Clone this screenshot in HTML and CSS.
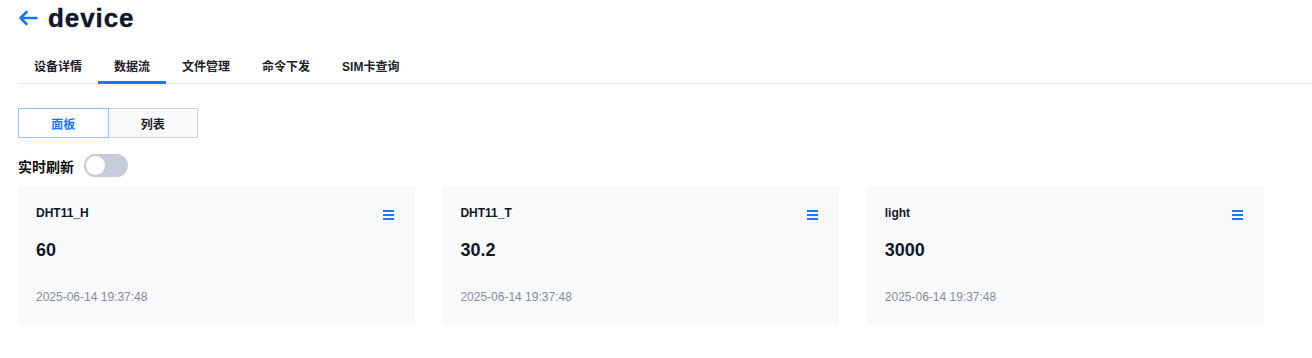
FILE: index.html
```html
<!DOCTYPE html>
<html lang="zh">
<head>
<meta charset="utf-8">
<title>device</title>
<link rel="stylesheet" href="styles.css">
</head>
<body>
<div class="page">
  <header class="header">
    <svg class="back" width="20" height="16" viewBox="0 0 20 16" aria-hidden="true">
      <path d="M18.5 8H2.5M8.5 2L2.5 8l6 6" fill="none" stroke="#1677ff" stroke-width="2.6" stroke-linecap="round" stroke-linejoin="round"/>
    </svg>
    <h1 class="title">device</h1>
  </header>

  <nav class="tabs">
    <div class="tab">设备详情</div>
    <div class="tab active">数据流</div>
    <div class="tab">文件管理</div>
    <div class="tab">命令下发</div>
    <div class="tab">SIM卡查询</div>
  </nav>

  <div class="segment">
    <div class="seg seg-on">面板</div>
    <div class="seg">列表</div>
  </div>

  <div class="refresh">
    <span class="refresh-label">实时刷新</span>
    <span class="switch"><span class="knob"></span></span>
  </div>

  <div class="cards">
    <div class="card">
      <div class="card-head">
        <span class="card-name">DHT11_H</span>
        <span class="menu"><i></i><i></i><i></i></span>
      </div>
      <div class="card-value">60</div>
      <div class="card-time">2025-06-14 19:37:48</div>
    </div>
    <div class="card">
      <div class="card-head">
        <span class="card-name">DHT11_T</span>
        <span class="menu"><i></i><i></i><i></i></span>
      </div>
      <div class="card-value">30.2</div>
      <div class="card-time">2025-06-14 19:37:48</div>
    </div>
    <div class="card">
      <div class="card-head">
        <span class="card-name">light</span>
        <span class="menu"><i></i><i></i><i></i></span>
      </div>
      <div class="card-value">3000</div>
      <div class="card-time">2025-06-14 19:37:48</div>
    </div>
  </div>
</div>
</body>
</html>
```

FILE: styles.css
```css
* { box-sizing: border-box; }
html, body { margin: 0; padding: 0; background: #fff; }
body {
  font-family: "Liberation Sans", "Noto Sans CJK SC", Arial, sans-serif;
  color: #1a1f2b;
}
.page { padding: 0 0 0 18px; }

.header {
  display: flex;
  align-items: center;
  height: 36px;
}
.back { display: block; margin-right: 10px; margin-top: -1px; }
.title {
  margin: 0;
  font-size: 26px;
  font-weight: 900;
  color: #0f1729;
  letter-spacing: 0.9px;
  line-height: 36px;
  -webkit-text-stroke: 0.4px #0f1729;
}

.tabs {
  display: flex;
  margin-top: 15px;
  border-bottom: 1px solid #e4e6ea;
  height: 33px;
}
.tab {
  padding: 0 16px;
  font-size: 12px;
  font-weight: 700;
  line-height: 32px;
  color: #1d2129;
  position: relative;
}
.tab.active::after {
  content: "";
  position: absolute;
  left: 0; right: 0; bottom: -1px;
  height: 3px;
  background: #1677ff;
}

.segment {
  display: flex;
  margin-top: 24px;
  width: 180px;
  height: 30px;
}
.seg {
  flex: 1;
  display: flex;
  align-items: center;
  justify-content: center;
  font-size: 12px;
  font-weight: 700;
  color: #1d2129;
  background: #fafafa;
  border: 1px solid #cfd2d6;
  border-left: none;
}
.seg-on {
  color: #1677ff;
  background: #fff;
  border: 1px solid #9dbdf5;
}

.refresh {
  display: flex;
  align-items: center;
  margin-top: 16px;
  height: 23px;
}
.refresh-label {
  font-size: 14px;
  font-weight: 700;
  color: #111;
  margin-right: 10px;
}
.switch {
  width: 44px;
  height: 23px;
  border-radius: 12px;
  background: #c6cdd9;
  padding: 2px;
  display: flex;
  align-items: center;
}
.knob {
  width: 19px;
  height: 19px;
  border-radius: 50%;
  background: #fff;
}

.cards {
  display: grid;
  grid-template-columns: repeat(3, 397px);
  column-gap: 27.4px;
  margin-top: 9px;
}
.card {
  background: #f8f9fb;
  height: 139px;
  padding: 19px 21px 0 18px;
  display: flex;
  flex-direction: column;
}
.card-head {
  display: flex;
  justify-content: space-between;
  align-items: flex-start;
  height: 16px;
}
.card-name {
  font-size: 12px;
  font-weight: 700;
  line-height: 16px;
  color: #111827;
}
.menu {
  display: flex;
  flex-direction: column;
  gap: 2px;
  width: 11px;
  margin-top: 5px;
}
.menu i {
  display: block;
  height: 2px;
  background: #1677ff;
}
.card-value {
  margin-top: 17px;
  font-size: 18px;
  font-weight: 700;
  line-height: 24px;
  color: #111827;
}
.card-time {
  margin-top: 27px;
  font-size: 12px;
  line-height: 16px;
  color: #868d99;
}
```
